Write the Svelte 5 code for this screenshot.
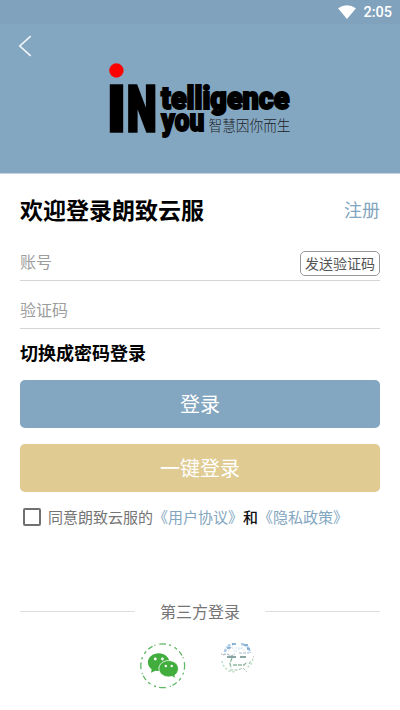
<script lang="ts">
	let account = $state('');
	let code = $state('');
	let agreed = $state(false);
</script>

<main class="screen">
	<header>
		<div class="status">
			<svg width="18" height="14" viewBox="0 0 18 14" aria-hidden="true">
				<path d="M0 3.2Q9-2.8 18 3.2L9 14Z" fill="#fff" />
			</svg>
			<span>2:05</span>
		</div>
		<button class="back" aria-label="返回">
			<svg width="14" height="22" viewBox="0 0 14 22">
				<path d="M12.7 1.2L1.8 11L12.7 20.8" fill="none" stroke="#f2f7fa" stroke-width="1.6" />
			</svg>
		</button>
		<svg class="logo" width="184" height="86" viewBox="108 61 184 86" role="img" aria-label="INtelligence you 智慧因你而生">
			<circle cx="116.4" cy="70.5" r="7.2" fill="#f00" />
			<g class="brand">
				<text class="large" x="107.4" y="131" font-size="62.5" textLength="18" lengthAdjust="spacingAndGlyphs">I</text>
				<text class="large" x="126.9" y="131" font-size="62.5" textLength="29.5" lengthAdjust="spacingAndGlyphs">N</text>
				<text x="161" y="109" font-size="31" textLength="128.5" lengthAdjust="spacingAndGlyphs">telligence</text>
				<text x="161.3" y="131" font-size="32" textLength="43" lengthAdjust="spacingAndGlyphs">you</text>
			</g>
			<text class="slogan" x="208.5" y="131.3" font-size="14.5" textLength="82" lengthAdjust="spacingAndGlyphs">智慧因你而生</text>
		</svg>
	</header>

	<section class="form">
		<div class="title">
			<h1>欢迎登录朗致云服</h1>
			<a href="#register">注册</a>
		</div>
		<div class="field account">
			<input placeholder="账号" bind:value={account} />
			<button class="send">发送验证码</button>
		</div>
		<div class="field code">
			<input placeholder="验证码" bind:value={code} />
		</div>
		<button class="switch">切换成密码登录</button>
		<button class="action">登录</button>
		<button class="action quick">一键登录</button>
		<label class="agree">
			<input type="checkbox" bind:checked={agreed} />
			<span>同意朗致云服的<a href="#terms">《用户协议》</a><b>和</b><a href="#privacy">《隐私政策》</a></span>
		</label>
	</section>

	<footer>
		<div class="divider"><span>第三方登录</span></div>
		<div class="social">
			<svg width="46" height="46" viewBox="0 0 46 46" role="img" aria-label="微信">
				<circle cx="22.7" cy="22.8" r="21.9" fill="none" stroke="#5fb865" stroke-width="1.3" stroke-dasharray="7 3 2 4 3 3 5 2 1 4" stroke-dashoffset="3" />
				<g fill="#41ad3d">
					<path d="M18.8 10.2c-6.2 0-10.9 4-10.9 9 0 2.9 1.4 5.3 3.7 7l-.5 3.6 4.2-2.1c1.2.3 2.3.4 3.4.4 5.9 0 10.7-4 10.7-8.9 0-5-4.8-9-10.6-9Z" />
					<path d="M28.7 17.6c-5.6 0-9.8 3.6-9.8 8.1s4.3 8.2 9.7 8.2c1.2 0 2.3-.2 3.3-.5l3.6 1.9-.6-3.2c2.1-1.4 3.5-3.7 3.5-6.4 0-4.5-4.3-8.1-9.7-8.1Z" stroke="#fff" stroke-width=".8" />
				</g>
				<g fill="#fff">
					<circle cx="15.3" cy="16" r="1.4" />
					<circle cx="22.4" cy="16" r="1.4" />
					<circle cx="25.8" cy="23" r="1.2" />
					<circle cx="31.7" cy="23" r="1.2" />
				</g>
			</svg>
			<svg width="36" height="32" viewBox="0 0 36 32" fill="none" role="img" aria-label="其他登录">
				<path d="M5 9Q6 2 14 1M21 1Q29 2 30 10" stroke="#a9c9e6" stroke-width="2.5" stroke-dasharray="3 1.5 1 1" />
				<path d="M12 1h4M24 2h4M7 5h4M27 6h3" stroke="#6f9fca" stroke-width="1.3" />
				<path d="M8 8l4-4 3 5 6-4 5 4M15 5h9" stroke="#d0dfed" stroke-dasharray="2 1" />
				<path d="M3 12q4-2 6 0t6-1M19 10h10" stroke="#a9bac9" stroke-width="1.2" stroke-dasharray="3 1" />
				<path d="M7 14h9M20 14h6" stroke="#668987" stroke-width="1.6" />
				<path d="M12 15l-2 5 1 5M13 22h11l3-3" stroke="#8fb9a0" stroke-width="1.3" stroke-dasharray="4 1" />
				<path d="M2 18q1 6 7 10l6 1M33 16l-2 5-4 4" stroke="#badfc2" stroke-width="1.5" stroke-dasharray="2 2" />
				<path d="M10 27h8l5-2 4 4M29 21l2-4" stroke="#9ebda8" stroke-dasharray="3 1.5" />
				<path d="M1 11h1.5M33 14h1" stroke="#cc9dad" />
			</svg>
		</div>
	</footer>
</main>

<style>
	:global(body) {
		margin: 0;
		background: #fff;
	}

	.screen {
		display: flex;
		flex-direction: column;
		width: 400px;
		height: 710px;
		overflow: hidden;
		background: #fff;
		font-family: 'Noto Sans CJK SC', sans-serif;
	}

	button {
		padding: 0;
		border: 0;
		background: none;
		font-family: inherit;
	}

	a {
		color: #83a6c0;
		text-decoration: none;
	}

	header {
		display: flex;
		flex-direction: column;
		height: 173px;
		border-bottom: 1px solid #c3d2de;
		background: #84a7c1;
	}

	.status {
		display: flex;
		align-items: center;
		justify-content: flex-end;
		gap: 7px;
		height: 24px;
		padding-right: 8px;
		background: #80a2bc;
		color: #fff;
		font: 500 14.5px Roboto, sans-serif;
	}

	.back {
		display: flex;
		width: 14px;
		margin: 11px 0 0 18px;
	}

	.logo {
		margin: 4px 0 0 108px;
		overflow: visible;
	}

	.brand {
		font-family: Roboto, sans-serif;
		font-weight: 900;
		stroke: #000;
		stroke-width: 1.9;
	}

	.large {
		stroke-width: 3.4;
	}

	.slogan {
		fill: #1c2226;
		font-weight: 300;
	}

	.form {
		display: flex;
		flex-direction: column;
		padding: 0 20px;
	}

	.title {
		display: flex;
		align-items: center;
		justify-content: space-between;
		height: 70px;
		padding-bottom: 2px;
	}

	h1 {
		margin: 0;
		font-size: 23px;
		font-weight: 700;
		line-height: 34px;
	}

	.title a {
		font-size: 18px;
	}

	.field {
		display: flex;
		align-items: center;
		box-sizing: border-box;
		border-bottom: 1px solid #d5d5d5;
	}

	.account {
		height: 35px;
	}

	.account input {
		padding-bottom: 4px;
	}

	.code {
		height: 48px;
		padding-top: 10px;
	}

	.field input {
		flex: 1;
		min-width: 0;
		padding-top: 0;
		border: 0;
		outline: 0;
		padding-inline: 0;
		font: 16px 'Noto Sans CJK SC', sans-serif;
	}

	.field input::placeholder {
		color: #9d9d9d;
	}

	.send {
		box-sizing: border-box;
		width: 80px;
		height: 25px;
		border: 1px solid #999;
		border-radius: 5px;
		color: #555;
		font-size: 14px;
		line-height: 22px;
	}

	.switch {
		height: 50px;
		padding-bottom: 4px;
		color: #000;
		font-size: 18px;
		font-weight: 700;
		line-height: 46px;
		text-align: left;
	}

	.action {
		height: 48px;
		margin-top: 1px;
		border-radius: 5px;
		background: #84a7c1;
		color: #fff;
		font-size: 20px;
		line-height: 48px;
	}

	.quick {
		margin-top: 16px;
		background: #e0cb92;
	}

	.agree {
		display: flex;
		align-items: center;
		height: 24px;
		margin-top: 13px;
		color: #757575;
		font-size: 15px;
		line-height: 24px;
		white-space: nowrap;
	}

	.agree input {
		appearance: none;
		box-sizing: border-box;
		width: 18px;
		height: 18px;
		margin: 0 7px 0 3px;
		border: 2px solid #707070;
		border-radius: 2px;
	}

	.agree b {
		color: #111;
		font-weight: 500;
	}

	footer {
		padding: 0 20px;
		margin-top: 70px;
	}

	.divider {
		display: flex;
		align-items: center;
		gap: 25px;
		height: 24px;
		color: #757575;
		font-size: 16px;
	}

	.divider::before,
	.divider::after {
		flex: 1;
		height: 1px;
		background: #ddd;
		content: '';
	}

	.social {
		display: flex;
		align-items: flex-start;
		gap: 34px;
		margin: 20px 0 0 120px;
	}
</style>
